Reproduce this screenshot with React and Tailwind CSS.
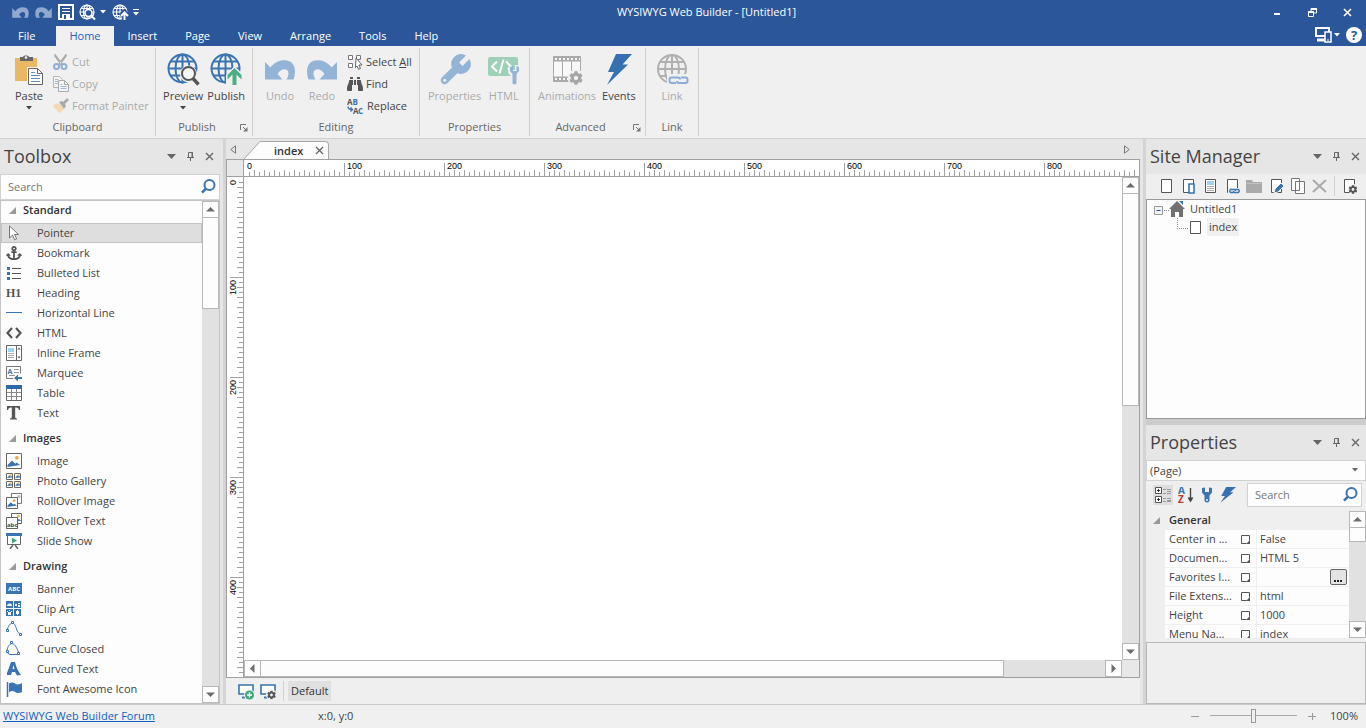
import { FaAnchor, FaBinoculars, FaCog } from "react-icons/fa";
import clsx from "clsx";

const BLUE = "#3a74b2";

const Svg = ({ w = 16, h = 16, className, children }) => (
  <svg width={w} height={h} viewBox={`0 0 ${w} ${h}`} fill="none" aria-hidden="true" className={clsx("shrink-0", className)}>
    {children}
  </svg>
);

/* ---------- small shared glyphs ---------- */

const Caret = ({ className }) => (
  <Svg w={6} h={4} className={className}>
    <path d="M0 0h6L3 3.6z" fill="currentColor" />
  </Svg>
);

const Launcher = () => (
  <Svg w={8} h={8}>
    <path d="M.5 6V.5H6M3 3l3 3" stroke="#777" />
    <path d="M7.5 3v4.5H3z" fill="#777" />
  </Svg>
);

const CloseX = ({ s = 9, className, width = 1.6 }) => (
  <Svg w={s} h={s} className={className}>
    <path d={`M1 1L${s - 1} ${s - 1}M${s - 1} 1L1 ${s - 1}`} stroke="currentColor" strokeWidth={width} />
  </Svg>
);

const Magnifier = () => (
  <Svg w={15} h={15} className="-translate-y-px">
    <circle cx="8.5" cy="6" r="5" stroke={BLUE} strokeWidth="2" />
    <path d="M5 9.6L1 13.6" stroke={BLUE} strokeWidth="2.6" />
  </Svg>
);

const Globe = ({ r, c, color, width }) => (
  <g stroke={color} strokeWidth={width}>
    <circle cx={c} cy={c} r={r} />
    <ellipse cx={c} cy={c} rx={r * 0.5} ry={r} />
    <path d={`M${c} ${c - r}v${r * 2}M${c - r} ${c}h${r * 2}M${c - r * 0.86} ${c - r * 0.5}h${r * 1.72}M${c - r * 0.86} ${c + r * 0.5}h${r * 1.72}`} />
  </g>
);

const Undo = ({ w = 30, h = 20, flip, className }) => (
  <svg width={w} height={h} viewBox="0 0 30 20" aria-hidden="true" className={clsx("shrink-0", flip && "-scale-x-100", className)}>
    <path
      d="M0 2v17.500h17.500L12.500 14C15 9.500 19.500 8 22 10c2.300 2 1.800 5.800-.5 9.500h7C31 12.500 30.500 4.500 25 1.500 18.500-1.500 10 1 5.500 7.500z"
      fill="currentColor"
    />
  </svg>
);

const WRENCH =
  "M14.700 6.300a1 1 0 0 0 0 1.400l1.600 1.600a1 1 0 0 0 1.400 0l3.770-3.770a6 6 0 0 1-7.940 7.940l-6.910 6.910a2.120 2.120 0 0 1-3-3l6.910-6.910a6 6 0 0 1 7.940-7.940l-3.760 3.760z";

const Bolt = ({ w, h }) => (
  <svg width={w} height={h} viewBox="0 0 26 32" preserveAspectRatio="none" aria-hidden="true" className="shrink-0">
    <path d="M10 0h16l-9.500 10.500H22L1 31l7-13H2z" fill="#3570b0" />
  </svg>
);

/* ---------- title bar ---------- */

const SaveIcon = () => (
  <Svg>
    <path d="M1 1h14v14H1z" stroke="#fff" strokeWidth="2" />
    <path d="M4 4.500h8M4 7.500h8" stroke="#fff" />
    <path d="M4 10h8v5H4z" fill="#fff" />
    <path d="M6 11h2v4H6z" fill="#2b579a" />
  </Svg>
);

const PreviewSmall = () => (
  <Svg w={17} h={17}>
    <Globe r={7} c={8} color="#fff" width={1.2} />
    <circle cx="9.500" cy="9" r="3.500" fill="#2b579a" stroke="#fff" strokeWidth="1.600" />
    <path d="M12 11.500l4 4" stroke="#fff" strokeWidth="2" />
  </Svg>
);

const PublishSmall = () => (
  <Svg w={17} h={17}>
    <Globe r={7} c={8} color="#fff" width={1.2} />
    <path d="M12.500 17V10M8.500 12l4-4 4 4" stroke="#2b579a" strokeWidth="5" />
    <path d="M12.500 16V9M9 12l3.500-3.500L16 12" stroke="#fff" strokeWidth="2" />
  </Svg>
);

const TitleBar = () => (
  <div className="flex h-6 items-center pl-3 text-white">
    <div className="flex w-[133px] items-center">
      <button type="button" aria-label="Undo" className="mr-1.5 text-[#8ea8d0]"><Undo w={17} h={11} /></button>
      <button type="button" aria-label="Redo" className="mr-1.5 text-[#8ea8d0]"><Undo w={17} h={11} flip /></button>
      <button type="button" aria-label="Save" className="mr-[5px]"><SaveIcon /></button>
      <button type="button" aria-label="Preview" className="mr-1"><PreviewSmall /></button>
      <button type="button" aria-label="Preview options" className="mr-1.5"><Caret /></button>
      <button type="button" aria-label="Publish" className="mr-1"><PublishSmall /></button>
      <button type="button" aria-label="Customize toolbar">
        <Svg w={6} h={7}><path d="M0 .5h6" stroke="#fff" /><path d="M0 3h6L3 6.500z" fill="#fff" /></Svg>
      </button>
    </div>
    <h1 className="flex-1 text-center">WYSIWYG Web Builder - [Untitled1]</h1>
    <div className="flex items-center pr-3.5 pl-1.5">
      <button type="button" aria-label="Minimize" className="mr-7 pt-1"><Svg w={6} h={2}><path d="M0 1h6" stroke="#fff" strokeWidth="2" /></Svg></button>
      <button type="button" aria-label="Restore" className="mr-[26px]">
        <Svg w={9} h={9}>
          <path d="M.5 4h5v4.500h-5zM3 3V.5h5.500V5H6" stroke="#fff" />
          <path d="M0 4h6M3 1h6" stroke="#fff" strokeWidth="2" />
        </Svg>
      </button>
      <button type="button" aria-label="Close"><CloseX s={9} /></button>
    </div>
  </div>
);

const TABS = ["Insert", "Page", "View", "Arrange", "Tools", "Help"];

const TabBar = () => (
  <nav className="flex h-[22px] items-end text-white">
    <button type="button" className="ml-1 mr-[7px] h-5 px-3.5">File</button>
    <button type="button" className="h-5 bg-[#f0f0f0] px-[13px] text-[#1e5fc0]">Home</button>
    {TABS.map((tab) => (
      <button key={tab} type="button" className="h-5 px-3.5">{tab}</button>
    ))}
    <div className="ml-auto flex items-center self-center pr-1">
      <button type="button" aria-label="Devices" className="mr-0.5">
        <Svg w={17} h={16}>
          <path d="M1 1h13v8H1z" stroke="#fff" strokeWidth="2" />
          <path d="M2 13h8" stroke="#fff" strokeWidth="3" />
          <path d="M10 5h6v10h-6z" fill="#2b579a" stroke="#fff" strokeWidth="1.500" />
          <path d="M12 13h2" stroke="#fff" />
        </Svg>
      </button>
      <button type="button" aria-label="Device options" className="mr-1.5"><Caret /></button>
      <button type="button" aria-label="Help" className="grid size-4 place-items-center rounded-full bg-white text-[13px] leading-4 font-bold text-[#2b579a]">?</button>
    </div>
  </nav>
);

/* ---------- ribbon ---------- */

const PasteIcon = () => (
  <Svg w={30} h={32}>
    <path d="M1 4h22v23H1z" fill="#eab765" />
    <path d="M6 3h3c0-2 6-2 6 0h4v4H6z" fill="#666" />
    <circle cx="12" cy="3.500" r="1.300" fill="#f0f0f0" />
    <path d="M13 13h16v19H13z" fill="#f0f0f0" />
    <path d="M14.500 14.500h9l5 5v11h-14z" fill="#fff" stroke="#666" />
    <path d="M23.500 14.500v5h5" stroke="#666" />
    <path d="M17 18.500h4M17 21.500h9M17 24.500h9M17 27.500h9" stroke="#5b8cc2" />
  </Svg>
);

const CutIcon = () => (
  <Svg>
    <path d="M2 0l8 10.500-2 .5L1.500 2zM13 0L5 10.500l2 .5L13.500 2z" fill="#a9a9a9" stroke="#a9a9a9" strokeWidth=".6" />
    <circle cx="3.500" cy="12.500" r="2.500" stroke="#8fb0d4" strokeWidth="2" />
    <circle cx="11" cy="12.500" r="2.500" stroke="#8fb0d4" strokeWidth="2" />
  </Svg>
);

const CopyIcon = () => (
  <Svg>
    <path d="M.5.500h6l3 3v8h-9z" fill="#f6f6f6" stroke="#b5b5b5" />
    <path d="M2 3.500h3M2 5.500h3M2 7.500h3" stroke="#9dbadb" />
    <path d="M5.500 4.500h6l4 4v7h-10z" fill="#f6f6f6" stroke="#aaa" />
    <path d="M11.500 4.500v4h4" stroke="#aaa" />
    <path d="M7.500 8.500h2M7.500 10.500h6M7.500 12.500h6" stroke="#9dbadb" />
  </Svg>
);

const PainterIcon = () => (
  <Svg>
    <path d="M0 7l6-2 5 6-4 4-3-2-1-2-2-1z" fill="#f3d8b0" />
    <path d="M6 4l3-1 1 1 4-4 2 2-4 4 1 2-2 3z" fill="#aaa" />
  </Svg>
);

const PreviewIcon = () => (
  <Svg w={33} h={33}>
    <Globe r={14} c={15.5} color={BLUE} width={2} />
    <circle cx="21.500" cy="21" r="8.500" fill="#f0f0f0" />
    <path d="M26 25l6 7" stroke="#f0f0f0" strokeWidth="6" />
    <circle cx="21.500" cy="20.500" r="6.500" fill="#f7f7f7" stroke="#555" strokeWidth="2" />
    <path d="M26 25.500l5.500 6" stroke="#555" strokeWidth="3.400" />
  </Svg>
);

const PublishIcon = () => (
  <Svg w={33} h={33}>
    <Globe r={14} c={15.5} color={BLUE} width={2} />
    <path d="M24.500 13l9 9v11H16V22z" fill="#f0f0f0" />
    <path d="M24.500 15l7 7v4.500l-5-5V32h-4V21.500l-5 5V22z" fill="#4dae86" />
  </Svg>
);

const WrenchIcon = () => (
  <svg width="36" height="36" viewBox="0 0 24 24" aria-hidden="true" className="shrink-0">
    <path d={WRENCH} fill="#93b3d7" stroke="#93b3d7" />
    <circle cx="5.200" cy="18.800" r="1" fill="#f0f0f0" />
  </svg>
);

const HtmlIcon = () => (
  <Svg w={33} h={33}>
    <rect x="1" y="4" width="30" height="19" rx="2" fill="#9ed0b8" />
    <path d="M10 8.500L5 13.500l5 5M19 8.500l5 5-3 3M16.500 6.500l-4 14" stroke="#fff" strokeWidth="2" />
    <path d="M22 12h2v5h4v-5h6v8l-3 3v10h-7V23l-3-3z" fill="#f0f0f0" />
    <path d="M23 14v4l2.500 3v9.500q2 2 4 0V21l2.500-3v-4l-2.500-1v5h-3.500v-5z" fill="#93b3d7" />
  </Svg>
);

const AnimationsIcon = () => (
  <Svg w={33} h={33}>
    <path d="M2.500 3.500h27v25h-27z" fill="#f8f8f8" stroke="#aaa" />
    <path d="M2 6h28M2 26h28" stroke="#aaa" strokeWidth="5" />
    <path d="M4 6h25M4 26h25" stroke="#f8f8f8" strokeWidth="2" strokeDasharray="2 2" />
    <path d="M11.500 8v16M20.500 8v16" stroke="#aaa" />
    <circle cx="25" cy="25" r="8.500" fill="#f0f0f0" />
    <FaCog x={18} y={18} size={14} color="#a5a5a5" />
  </Svg>
);

const LinkIcon = () => (
  <Svg w={33} h={33}>
    <Globe r={14} c={16} color="#b0b0b0" width={2} />
    <path d="M11 21h22v11H11z" fill="#f0f0f0" />
    <path d="M20 30h-4.500q-2 0-2-2v-1.500q0-2 2-2H22q2 0 2 2M25 24.500h4.500q2 0 2 2V28q0 2-2 2H23q-2 0-2-2" stroke="#8aaed6" strokeWidth="2" />
  </Svg>
);

const SelectAllIcon = () => (
  <Svg>
    <path d="M1.500 1.500h4v4h-4zM9.500 1.500h4v4h-4zM1.500 9.500h4v4h-4z" fill="#fff" stroke="#777" />
    <path d="M9 4l6 7h-3l1.500 3.500-2 .8L10 12l-1.500 1.500z" fill="#fff" stroke="#666" />
  </Svg>
);

const ReplaceIcon = () => (
  <Svg w={17} h={17}>
    <g fontFamily="Open Sans, sans-serif" fontSize="8" fontWeight="700">
      <text x="0" y="7" fill="#555">A</text>
      <text x="5.500" y="7" fill={BLUE}>B</text>
      <text x="6" y="16" fill="#555">A</text>
      <text x="11" y="16" fill={BLUE}>C</text>
    </g>
    <path d="M1 8.500c0 2 1 3 4 3M3.500 9.500l2 2-2 2" stroke={BLUE} strokeWidth="1.400" />
  </Svg>
);

const RibbonGroup = ({ label, width, launcher, className, children }) => (
  <section aria-label={label} className={clsx("mt-px mb-0.5 flex flex-col border-r border-[#d0d0d0]", width)}>
    <div className={clsx("flex flex-1 items-start pt-[3px]", className)}>{children}</div>
    <div className="relative h-[18px] text-center leading-[18px] text-[#666]">
      {label}
      {launcher && (
        <button type="button" aria-label={`${label} settings`} className="absolute top-1.5 right-1">
          <Launcher />
        </button>
      )}
    </div>
  </section>
);

const BigButton = ({ icon, label, caret, disabled }) => (
  <button type="button" disabled={disabled} className={clsx("flex flex-col items-center px-0.5", disabled ? "text-[#aaa]" : "text-[#444]")}>
    <span className="flex h-[37px] items-center">{icon}</span>
    <span className="leading-4">{label}</span>
    {caret && <Caret className="mt-0.5" />}
  </button>
);

const SmallButton = ({ icon, disabled, children }) => (
  <button type="button" disabled={disabled} className={clsx("flex h-[22px] items-center gap-[3px]", disabled ? "text-[#aaa]" : "text-[#444]")}>
    {icon}
    <span>{children}</span>
  </button>
);

const Ribbon = () => (
  <div className="flex h-[93px] border-b border-[#d0d0d0] bg-[#f0f0f0] pt-px">
    <RibbonGroup label="Clipboard" width="w-[156px]" className="gap-[7px] pl-3">
      <BigButton icon={<PasteIcon />} label="Paste" caret />
      <div className="flex flex-col">
        <SmallButton disabled icon={<CutIcon />}>Cut</SmallButton>
        <SmallButton disabled icon={<CopyIcon />}>Copy</SmallButton>
        <SmallButton disabled icon={<PainterIcon />}>Format Painter</SmallButton>
      </div>
    </RibbonGroup>
    <RibbonGroup label="Publish" width="w-[97px] [&>div:last-child]:pr-3.5" className="justify-center" launcher>
      <BigButton icon={<PreviewIcon />} label="Preview" caret />
      <BigButton icon={<PublishIcon />} label="Publish" />
    </RibbonGroup>
    <RibbonGroup label="Editing" width="w-[167px]" className="gap-2 pl-2.5">
      <BigButton disabled icon={<Undo className="text-[#93b3d7]" />} label="Undo" />
      <BigButton disabled icon={<Undo flip className="text-[#93b3d7]" />} label="Redo" />
      <div className="flex flex-col">
        <SmallButton icon={<SelectAllIcon />}>Select <u>A</u>ll</SmallButton>
        <SmallButton icon={<FaBinoculars size={16} color="#555" />}>Find</SmallButton>
        <SmallButton icon={<ReplaceIcon />}>Replace</SmallButton>
      </div>
    </RibbonGroup>
    <RibbonGroup label="Properties" width="w-[110px]" className="gap-0.5 pl-1.5">
      <BigButton disabled icon={<WrenchIcon />} label="Properties" />
      <BigButton disabled icon={<HtmlIcon />} label="HTML" />
    </RibbonGroup>
    <RibbonGroup label="Advanced" width="w-[116px] [&>div:last-child]:pr-3.5" className="gap-0.5 pl-1.5" launcher>
      <BigButton disabled icon={<AnimationsIcon />} label="Animations" />
      <BigButton icon={<Bolt w={26} h={32} />} label="Events" />
    </RibbonGroup>
    <RibbonGroup label="Link" width="w-[53px]" className="justify-center">
      <BigButton disabled icon={<LinkIcon />} label="Link" />
    </RibbonGroup>
  </div>
);

/* ---------- panels ---------- */

const PanelHeader = ({ title }) => (
  <div className="flex h-[35px] shrink-0 items-center bg-[#e6e6e6] pr-1.5 pl-1 text-[#666]">
    <h2 className="mr-auto pb-0.5 text-[18px] leading-7 text-[#444]">{title}</h2>
    <button type="button" aria-label={`${title} menu`}><Svg w={9} h={5}><path d="M0 0h9L4.500 5z" fill="currentColor" /></Svg></button>
    <button type="button" aria-label={`Pin ${title}`} className="mx-2.5">
      <Svg w={9} h={9}><path d="M2.500 5V.5h4V5M1 5.500h7M4.500 6v3" stroke="currentColor" /><path d="M6 0v5" stroke="currentColor" /></Svg>
    </button>
    <button type="button" aria-label={`Close ${title}`}><CloseX s={9} width={1.4} /></button>
  </div>
);

const ARROWS = {
  up: "M1 6.500h9L5.500 2z",
  down: "M1 2.500h9L5.500 7z",
  left: "M7.500 0v9L3 4.500z",
  right: "M3.500 0v9L8 4.500z",
};

const ScrollButton = ({ dir }) => (
  <button type="button" aria-label={`Scroll ${dir}`} className="grid size-[17px] shrink-0 place-items-center border border-[#b8b8b8] bg-[#fdfdfd]">
    <Svg w={11} h={9}><path d={ARROWS[dir]} fill="#6d6d6d" /></Svg>
  </button>
);

const VScroll = ({ thumb }) => (
  <div className="flex w-[17px] shrink-0 flex-col bg-[#e1e1e1]">
    <ScrollButton dir="up" />
    <div className={clsx("border border-t-0 border-[#b8b8b8] bg-[#fdfdfd]", thumb)} />
    <div className="flex-1" />
    <ScrollButton dir="down" />
  </div>
);

/* ---------- toolbox ---------- */

const Picture = ({ x, y, s }) => (
  <g>
    <path d={`M${x + 0.5} ${y + 0.5}h${s - 1}v${s - 1}h-${s - 1}z`} fill="#fff" stroke="#666" />
    <path d={`M${x + 1.5} ${y + s - 2}v-${s * 0.12}l${s * 0.28}-${s * 0.28} ${s * 0.2} ${s * 0.2} ${s * 0.1}-${s * 0.08} ${s * 0.2} ${s * 0.16}z`} fill={BLUE} />
    <circle cx={x + s * 0.68} cy={y + s * 0.3} r={s * 0.12} fill="#e9a94b" />
  </g>
);

const Node = ({ x, y }) => <path d={`M${x} ${y}h2v2h-2z`} fill="#fff" stroke={BLUE} />;

const ICONS = {
  Pointer: <path d="M3.500 1v12l3-2.800 2.200 4.600 2-1L8.500 9.500h4z" fill="#fff" stroke="#777" />,
  Bookmark: <FaAnchor size={16} color="#555" />,
  "Bulleted List": (
    <>
      <path d="M1 2h3v3H1zM1 7h3v3H1zM1 12h3v3H1z" fill={BLUE} />
      <path d="M6 3.500h9M6 8.500h9M6 13.500h9" stroke="#555" />
    </>
  ),
  Heading: <text x="0" y="12" fontFamily="Liberation Serif, serif" fontSize="12" fontWeight="700" fill="#555">H1</text>,
  "Horizontal Line": <path d="M0 7.500h16" stroke={BLUE} />,
  HTML: <path d="M6 3L1.500 8 6 13M10 3l4.500 5-4.500 5" stroke="#555" strokeWidth="2.200" />,
  "Inline Frame": (
    <>
      <path d="M.5.500h15v15H.5zM10.500 1v14" fill="#fff" stroke="#666" />
      <path d="M2 3h6v4H2z" fill="#9fd3f3" />
      <path d="M2 8.500h6M2 10.500h6M2 12.500h6" stroke="#aaa" />
      <path d="M11.500 4.500h3L13 2.500zM11.500 11.500h3L13 13.500z" fill="#555" />
    </>
  ),
  Marquee: (
    <>
      <path d="M7 13.500H.5V1.500h14v7" stroke="#777" />
      <text x="1.500" y="9" fontFamily="Open Sans, sans-serif" fontSize="7" fontWeight="700" fill={BLUE}>A</text>
      <path d="M8 4.500h5M8 7.500h5M3 10.500h6" stroke="#999" />
      <path d="M8 13l4-3.500V12h4v2h-4v2.500z" fill={BLUE} />
    </>
  ),
  Table: (
    <>
      <path d="M.5.500h15v15H.5z" fill="#fff" stroke="#666" />
      <path d="M0 0h16v4H0z" fill="#2f68a8" />
      <path d="M1 7.500h14M1 11.500h14M5.500 4v11M10.500 4v11" stroke="#888" />
    </>
  ),
  Text: <path d="M1 1h13v4h-1q-.5-2.500-2.500-2.500H9.200V12q0 1.500 1.800 1.600v.9H4v-.9q1.800-.1 1.800-1.600V2.500H4.500Q2.500 2.500 2 5H1z" fill="#555" />,
  Image: <Picture x={0} y={0} s={16} />,
  "Photo Gallery": (
    <>
      <Picture x={0} y={0} s={7} />
      <Picture x={8} y={0} s={7} />
      <Picture x={0} y={8} s={7} />
      <Picture x={8} y={8} s={7} />
    </>
  ),
  "RollOver Image": (
    <>
      <path d="M5.500.500h10v10h-10z" fill="#fff" stroke="#777" />
      <circle cx="13" cy="3.500" r="1.500" fill="#bbb" />
      <Picture x={0} y={4} s={12} />
    </>
  ),
  "RollOver Text": (
    <>
      <Picture x={5} y={0} s={11} />
      <path d="M.5 4.500h11v11H.5z" fill="#fff" stroke="#666" />
      <text x="1" y="14" fontFamily="Open Sans, sans-serif" fontSize="6" fontWeight="700" fill="#444">abc</text>
    </>
  ),
  "Slide Show": (
    <>
      <path d="M1.500 2v9.500h13V2" fill="#fff" stroke="#666" />
      <path d="M0 0h16v3H0z" fill={BLUE} />
      <path d="M6 4.500v6l5-3z" fill="#3fa67c" />
      <path d="M7 12l-3 4M9 12l3 4" stroke="#666" strokeWidth="1.500" />
    </>
  ),
  Banner: (
    <>
      <path d="M0 2h16v11H0z" fill={BLUE} />
      <text x="8" y="10" textAnchor="middle" fontFamily="Open Sans, sans-serif" fontSize="6" fontWeight="700" fill="#fff">ABC</text>
    </>
  ),
  "Clip Art": (
    <>
      <path d="M0 0h7v7H0zM8 0h7v7H8zM0 8h7v7H0zM8 8h7v7H8z" fill={BLUE} />
      <path d="M1 5q0-2 1.500-2 1.500-1.500 2.500 0 1 .5 1 2zM9 3h2v2H9zM12 2h2v1h-2zM12 4h2v2h-2zM2 11h3v3H2zM1 10h1v1H1zM3 9h1v1H3zM5 10h1v1H5zM10 10h3v3h-3zM11 9h1v5h-1z" fill="#fff" />
    </>
  ),
  Curve: (
    <>
      <path d="M1.500 8C3 4 4.500 2 6.500 2s3 3 4 6 2 4.500 4 4.500" stroke={BLUE} />
      <Node x={0.5} y={8.5} /><Node x={5.5} y={0.5} /><Node x={13.5} y={12.5} />
    </>
  ),
  "Curve Closed": (
    <>
      <path d="M6 2.500C3 3 1 7 1 10.500q0 2 3 3h9C12 9 9.500 3 6 2.500z" stroke={BLUE} />
      <Node x={4.5} y={0.5} /><Node x={0.5} y={9.5} /><Node x={11.5} y={11.5} />
    </>
  ),
  "Curved Text": (
    <path d="M1 12L5 1h4c1 5 3 9 6 13l-4 .5L9 11H6l-1 3H1zM6.500 8h2L7.500 4z" fill={BLUE} fillRule="evenodd" />
  ),
  "Font Awesome Icon": (
    <>
      <path d="M1.500 1v15" stroke={BLUE} strokeWidth="1.500" />
      <path d="M3 2.500q3-2 6 0t7-.5v9q-4 2-7 0t-6 .5z" fill={BLUE} />
    </>
  ),
  Form: <path d="M1.500.500h2v3M4 2.500h4" stroke={BLUE} />,
};

const TOOLS = [
  { name: "Standard", items: ["Pointer", "Bookmark", "Bulleted List", "Heading", "Horizontal Line", "HTML", "Inline Frame", "Marquee", "Table", "Text"] },
  { name: "Images", items: ["Image", "Photo Gallery", "RollOver Image", "RollOver Text", "Slide Show"] },
  { name: "Drawing", items: ["Banner", "Clip Art", "Curve", "Curve Closed", "Curved Text", "Font Awesome Icon"] },
];

const Expander = () => (
  <Svg w={7} h={7}><path d="M7 0v7H0z" fill="#999" /></Svg>
);

const Toolbox = () => (
  <aside className="flex w-[220px] shrink-0 flex-col">
    <PanelHeader title="Toolbox" />
    <label className="flex h-[26px] shrink-0 items-center border border-[#d2d2d2] bg-[#fdfdfd] pr-[3px] pl-[7px]">
      <input type="search" placeholder="Search" aria-label="Search toolbox" className="min-w-0 flex-1 outline-none placeholder:text-[#777]" />
      <Magnifier />
    </label>
    <div className="flex min-h-0 flex-1 border border-[#c4c4c4] bg-[#fdfdfd]">
      <div className="min-w-0 flex-1 overflow-hidden">
        <div className="-mt-1.5">
          {TOOLS.map((group) => (
            <section key={group.name}>
              <h3 className="flex h-7 items-center gap-[7px] pt-0.5 pl-2 font-semibold text-[#333]">
                <Expander />
                {group.name}
              </h3>
              <ul>
                {group.items.map((item) => (
                  <li key={item}>
                    <button
                      type="button"
                      className={clsx(
                        "flex h-5 w-full items-center gap-[15px] pl-[5px] text-left",
                        item === "Pointer" && "bg-[#dedede] outline outline-1 -outline-offset-1 outline-[#c3c3c3]"
                      )}
                    >
                      <Svg>{ICONS[item]}</Svg>
                      {item}
                    </button>
                  </li>
                ))}
              </ul>
            </section>
          ))}
          <div className="pt-1 pl-[5px]"><Svg>{ICONS.Form}</Svg></div>
        </div>
      </div>
      <VScroll thumb="h-[91px]" />
    </div>
  </aside>
);

/* ---------- canvas ---------- */

const TICKS = Array.from({ length: 600 }, (_, i) => (i + 1) * 5);
const tickSize = (v) => (v % 100 === 0 ? 13 : v % 10 === 0 ? 6 : 4);

const H_LABELS = [0, 100, 200, 300, 400, 500, 600, 700, 800];
const V_LABELS = [0, 100, 200, 300, 400];

const HRuler = () => (
  <div className="h-[17px] min-w-0 flex-1 overflow-hidden border-b border-[#a0a0a0] bg-white">
    <svg width="3000" height="16" aria-hidden="true" fontFamily="Liberation Sans, sans-serif" fontSize="9">
      <path d={TICKS.map((v) => `M${v + 0.5} 16v-${tickSize(v)}`).join("")} stroke="#a0a0a0" />
      {H_LABELS.map((v) => (
        <text key={v} x={v + 3} y="9">{v}</text>
      ))}
    </svg>
  </div>
);

const VRuler = () => (
  <div className="w-[17px] shrink-0 overflow-hidden border-r border-[#a0a0a0] bg-white">
    <svg width="16" height="3000" aria-hidden="true" fontFamily="Liberation Sans, sans-serif" fontSize="9">
      <path d={TICKS.map((v) => `M16 ${v + 0.5}h-${tickSize(v)}`).join("")} stroke="#a0a0a0" />
      {V_LABELS.map((v) => (
        <text key={v} transform={`translate(9 ${v + 3}) rotate(-90)`} textAnchor="end">{v}</text>
      ))}
    </svg>
  </div>
);

const Monitor = ({ children }) => (
  <Svg w={17} h={17}>
    <path d="M1 2h14v9H1z" fill="#fff" stroke={BLUE} strokeWidth="1.600" />
    <path d="M4 14.500h6" stroke={BLUE} strokeWidth="2" />
    <circle cx="11.500" cy="12" r="5.500" fill="#efefef" />
    {children}
  </Svg>
);

const Workspace = () => (
  <main className="flex min-w-0 flex-1 flex-col">
    <div className="flex h-5 shrink-0 items-end bg-[#e6e6e6]">
      <button type="button" aria-label="Previous tab" className="mr-2 ml-1 self-center"><Svg w={6} h={9}><path d="M5.500.800v7.400L.8 4.500z" stroke="#777" /></Svg></button>
      <div className="flex h-[18px] items-stretch">
        <Svg w={17} h={18}><path d="M0 18L16 .5h1V18z" fill="#fdfdfd" /><path d="M0 18L16 .5h1" stroke="#a8a8a8" /></Svg>
        <div className="flex items-center rounded-tr-sm border-t border-r border-[#a8a8a8] bg-[#fdfdfd] pr-1 pl-[13px]">
          <span className="font-semibold text-[#333]">index</span>
          <button type="button" aria-label="Close index" className="ml-3 text-[#666]"><CloseX s={9} width={1.3} /></button>
        </div>
      </div>
      <button type="button" aria-label="Next tab" className="mr-2.5 ml-auto self-center"><Svg w={6} h={9}><path d="M.5.800v7.400l4.700-3.700z" stroke="#777" /></Svg></button>
    </div>
    <div className="flex min-h-0 flex-1 flex-col border border-[#a0a0a0]">
      <div className="flex shrink-0">
        <div className="size-[17px] shrink-0 border-r border-b border-[#a0a0a0] bg-[#e8e8e8]" />
        <HRuler />
      </div>
      <div className="flex min-h-0 flex-1">
        <VRuler />
        <div className="flex min-w-0 flex-1 flex-col">
          <div className="flex min-h-0 flex-1">
            <div className="flex-1 bg-white" />
            <VScroll thumb="h-[212px]" />
          </div>
          <div className="flex h-[17px] shrink-0 bg-[#e1e1e1]">
            <ScrollButton dir="left" />
            <div className="w-[83%] border border-l-0 border-[#b8b8b8] bg-[#fdfdfd]" />
            <div className="flex-1" />
            <ScrollButton dir="right" />
            <div className="w-[17px] bg-[#e8e8e8]" />
          </div>
        </div>
      </div>
    </div>
    <div className="flex h-[26px] shrink-0 items-center bg-[#efefef] pl-3">
      <button type="button" aria-label="Add breakpoint">
        <Monitor><circle cx="11.500" cy="12" r="4.500" fill="#3fa67c" /><path d="M11.500 9.500v5M9 12h5" stroke="#fff" strokeWidth="1.500" /></Monitor>
      </button>
      <button type="button" aria-label="Breakpoint settings" className="mr-1.5 ml-[5px]">
        <Monitor><FaCog x={7} y={7.5} size={9} color="#555" /></Monitor>
      </button>
      <div className="h-5 w-px bg-[#d0d0d0]" />
      <button type="button" className="ml-1 h-5 bg-[#e0e0e0] px-[3px] text-[#333]">Default</button>
    </div>
  </main>
);

/* ---------- site manager ---------- */

const Sheet = ({ children }) => (
  <Svg>
    <path d="M3.500 1.500h10v13h-10z" fill="#fff" stroke="#555" />
    {children}
  </Svg>
);

const SITE_ACTIONS = [
  ["New page", <Sheet />],
  ["New mobile page", <Sheet><path d="M9 6h5v9H9z" fill="#fff" stroke={BLUE} strokeWidth="1.600" /></Sheet>],
  ["New template", <Sheet><path d="M5 3h7v4H5z" fill="#9fd3f3" /><path d="M5 8.500h7M5 10.500h7M5 12.500h7" stroke="#aaa" /></Sheet>],
  ["New link", <Sheet><path d="M4 10h12v6H4z" fill="#efefef" /><path d="M9.500 14.500h-3q-1.500-1.500 0-3h4q1 0 1 1.500M11.500 11.500h3q1.500 1.500 0 3h-4q-1 0-1-1.500" stroke={BLUE} strokeWidth="1.400" /></Sheet>],
  ["New folder", <Svg><path d="M0 2h6l1 2h9v11H0z" fill="#aaa" /><path d="M1 5.500h14" stroke="#c4c4c4" /></Svg>],
  ["Edit page", <Sheet><path d="M6 15l1-4 6-6 3 3-6 6z" fill={BLUE} stroke="#efefef" /></Sheet>],
  ["Clone page", <Svg><path d="M1.500.500h8v12h-8zM5.500 3.500h9v12h-9z" fill="#fff" stroke="#777" /></Svg>],
  ["Delete page", <Svg><path d="M1 2l13 12M14 2L1 14" stroke="#aaa" strokeWidth="2" /></Svg>],
];

const SiteManager = () => (
  <section className="flex h-[280px] shrink-0 flex-col">
    <PanelHeader title="Site Manager" />
    <div className="flex h-[25px] shrink-0 items-center gap-1.5 bg-[#efefef] pb-px pl-3">
      {SITE_ACTIONS.map(([label, icon]) => (
        <button key={label} type="button" aria-label={label}>{icon}</button>
      ))}
      <div className="h-5 w-px bg-[#d0d0d0]" />
      <button type="button" aria-label="Page properties">
        <Sheet><circle cx="12" cy="11" r="5" fill="#efefef" /><FaCog x={7.5} y={7} size={9} color="#555" /></Sheet>
      </button>
    </div>
    <ul role="tree" className="flex-1 border border-[#999] bg-[#fdfdfd]">
      <li role="treeitem" aria-expanded="true" className="flex h-[18px] items-center pl-[7px]">
        <Svg w={32} h={18}>
          <path d="M.5 6.500h8v8h-8z" fill="#f4f4f4" stroke="#999" />
          <path d="M2.500 10.500h4" stroke="#2d4fa0" />
          <path d="M10 10.500h5" stroke="#888" strokeDasharray="1 1" />
          <path d="M25 1h4v4z" fill={BLUE} />
          <path d="M23 1l8 8h-2v8h-4v-5h-4v5h-4V9h-2z" fill="#707070" />
        </Svg>
        <span className="ml-1">Untitled1</span>
      </li>
      <li role="treeitem" className="flex h-[18px] items-center pl-[30px]">
        <Svg w={24} h={18}>
          <path d="M.5 0v10.500H12" stroke="#888" strokeDasharray="1 1" />
          <path d="M13.500 3.500h10v12h-10z" fill="#fff" stroke="#555" />
        </Svg>
        <span className="ml-1.5 bg-[#f0f0f0] px-0.5 leading-[18px]">index</span>
      </li>
    </ul>
  </section>
);

/* ---------- properties ---------- */

const PROPS = [
  ["Center in ...", "False"],
  ["Documen...", "HTML 5"],
  ["Favorites I...", null],
  ["File Extens...", "html"],
  ["Height", "1000"],
  ["Menu Na...", "index"],
];

const Properties = () => (
  <section className="flex min-h-0 flex-1 flex-col bg-[#efefef]">
    <PanelHeader title="Properties" />
    <div className="relative h-[21px] shrink-0">
      <select aria-label="Object" className="h-full w-full appearance-none border border-[#d2d2d2] bg-[#fdfdfd] pl-[3px]">
        <option>(Page)</option>
      </select>
      <Caret className="pointer-events-none absolute top-2 right-2 text-[#666]" />
    </div>
    <div className="flex h-[30px] shrink-0 items-center gap-[5px] pr-1 pb-0.5 pl-[7px]">
      <button type="button" aria-label="Categorized" className="grid size-5 place-items-center bg-[#dedede]">
        <Svg>
          <path d="M.5.500h6v6h-6zM.5 9.500h6v6h-6z" fill="#fff" stroke="#555" />
          <path d="M2 3.500h3M3.500 2v3M2 12.500h3M3.500 11v3" stroke="#333" />
          <path d="M8 2.500h3M12 2.500h4M8 6.500h3M12 6.500h4M8 11.500h3M12 11.500h4M8 14.500h3M12 14.500h4M12 4.500h4M12 13.500h4" stroke="#999" />
        </Svg>
      </button>
      <button type="button" aria-label="Alphabetical">
        <Svg>
          <g fontFamily="Open Sans, sans-serif" fontSize="10" fontWeight="700">
            <text x="0" y="7" fill={BLUE}>A</text>
            <text x="0" y="16" fill="#c0392b">Z</text>
          </g>
          <path d="M12.500 1v12" stroke="#444" strokeWidth="1.400" />
          <path d="M9.500 10.500h6l-3 5z" fill="#444" />
        </Svg>
      </button>
      <button type="button" aria-label="Properties">
        <Svg>
          <path d="M3 1v4.500l2.500 3V14q2.500 3 5 0V8.500l2.500-3V1l-3-.5v4.500H6V.5z" fill={BLUE} />
          <circle cx="8" cy="13" r="1" fill="#efefef" />
        </Svg>
      </button>
      <button type="button" aria-label="Events"><Bolt w={16} h={16} /></button>
      <label className="ml-auto flex h-6 w-[115px] items-center border border-[#d2d2d2] bg-[#fdfdfd] pr-[3px] pl-[7px]">
        <input type="search" placeholder="Search" aria-label="Search properties" className="w-0 min-w-0 flex-1 outline-none placeholder:text-[#777]" />
        <Magnifier />
      </label>
    </div>
    <div className="flex h-[127px] shrink-0">
      <div className="min-w-0 flex-1 overflow-hidden">
        <h3 className="flex h-[19px] items-center gap-[9px] pb-px pl-[7px] font-semibold text-[#333]">
          <Expander />
          General
        </h3>
        <div className="pl-[19px]">
          <table className="w-full table-fixed border-separate border-spacing-0">
            <tbody>
              {PROPS.map(([name, value]) => (
                <tr key={name} className="h-[19px] bg-[#fdfdfd]">
                  <th scope="row" className="w-[92px] border-r border-b border-[#efefef] p-0 text-left font-normal">
                    <div className="flex h-[18px] items-center justify-between pr-1.5 pl-1">
                      {name}
                      <Svg w={9} h={9}><path d="M4.500 8.500h-4v-8h8v4M3.500 8.500h2M8.500 3.500v2" stroke="#555" /><path d="M9 5v4H5z" fill="#555" /></Svg>
                    </div>
                  </th>
                  <td className="border-b border-[#efefef] p-0 pl-[3px]">
                    {value ?? (
                      <button type="button" aria-label={`Browse ${name}`} className="mr-0.5 ml-auto flex h-4 w-[17px] items-end justify-center rounded-xs border border-[#666] bg-[#e4e4e4] pb-0.5">
                        <Svg w={9} h={3}><path d="M0 1h2v2H0zM3 1h2v2H3zM6 1h2v2H6z" fill="#222" /></Svg>
                      </button>
                    )}
                  </td>
                </tr>
              ))}
            </tbody>
          </table>
        </div>
      </div>
      <VScroll thumb="h-[14px]" />
    </div>
    <div className="mt-1 flex-1 border border-[#b8b8b8]" />
  </section>
);

const StatusBar = () => (
  <footer className="flex h-6 shrink-0 items-center border-t border-[#c8c8c8] bg-[#f0f0f0] pr-2 pb-0.5 pl-[3px]">
    <a href="#forum" className="w-[315px] text-[#1161c4] underline">WYSIWYG Web Builder Forum</a>
    <span>x:0, y:0</span>
    <div className="ml-auto flex items-center">
      <button type="button" aria-label="Zoom out"><Svg w={8} h={8}><path d="M0 4.500h8" stroke="#999" /></Svg></button>
      <input
        type="range"
        aria-label="Zoom"
        defaultValue="50"
        className="mx-[11px] h-3.5 w-[87px] appearance-none bg-[linear-gradient(#aaa,#aaa)] bg-[length:100%_1px] bg-center bg-no-repeat [&::-webkit-slider-thumb]:h-3.5 [&::-webkit-slider-thumb]:w-[5px] [&::-webkit-slider-thumb]:appearance-none [&::-webkit-slider-thumb]:border [&::-webkit-slider-thumb]:border-[#999] [&::-webkit-slider-thumb]:bg-[#f0f0f0]"
      />
      <button type="button" aria-label="Zoom in"><Svg w={8} h={8}><path d="M0 4.500h8M4.500 1v7" stroke="#999" /></Svg></button>
      <span className="ml-3.5">100%</span>
    </div>
  </footer>
);

const Gutter = () => <div className="w-1.5 shrink-0 border-r-3 border-[#d4d4d4] bg-[#e6e6e6]" />;

export default function App() {
  return (
    <div className="flex h-screen flex-col bg-[#e6e6e6] font-['Open_Sans',sans-serif] text-[11px] leading-4 text-[#444]">
      <header className="shrink-0">
        <div className="bg-[#2b579a]">
          <TitleBar />
          <TabBar />
        </div>
        <Ribbon />
      </header>
      <div className="flex min-h-0 flex-1">
        <Toolbox />
        <Gutter />
        <Workspace />
        <Gutter />
        <aside className="flex w-[220px] shrink-0 flex-col">
          <SiteManager />
          <div className="h-1.5 shrink-0 bg-[#ccc]" />
          <Properties />
        </aside>
      </div>
      <StatusBar />
    </div>
  );
}
